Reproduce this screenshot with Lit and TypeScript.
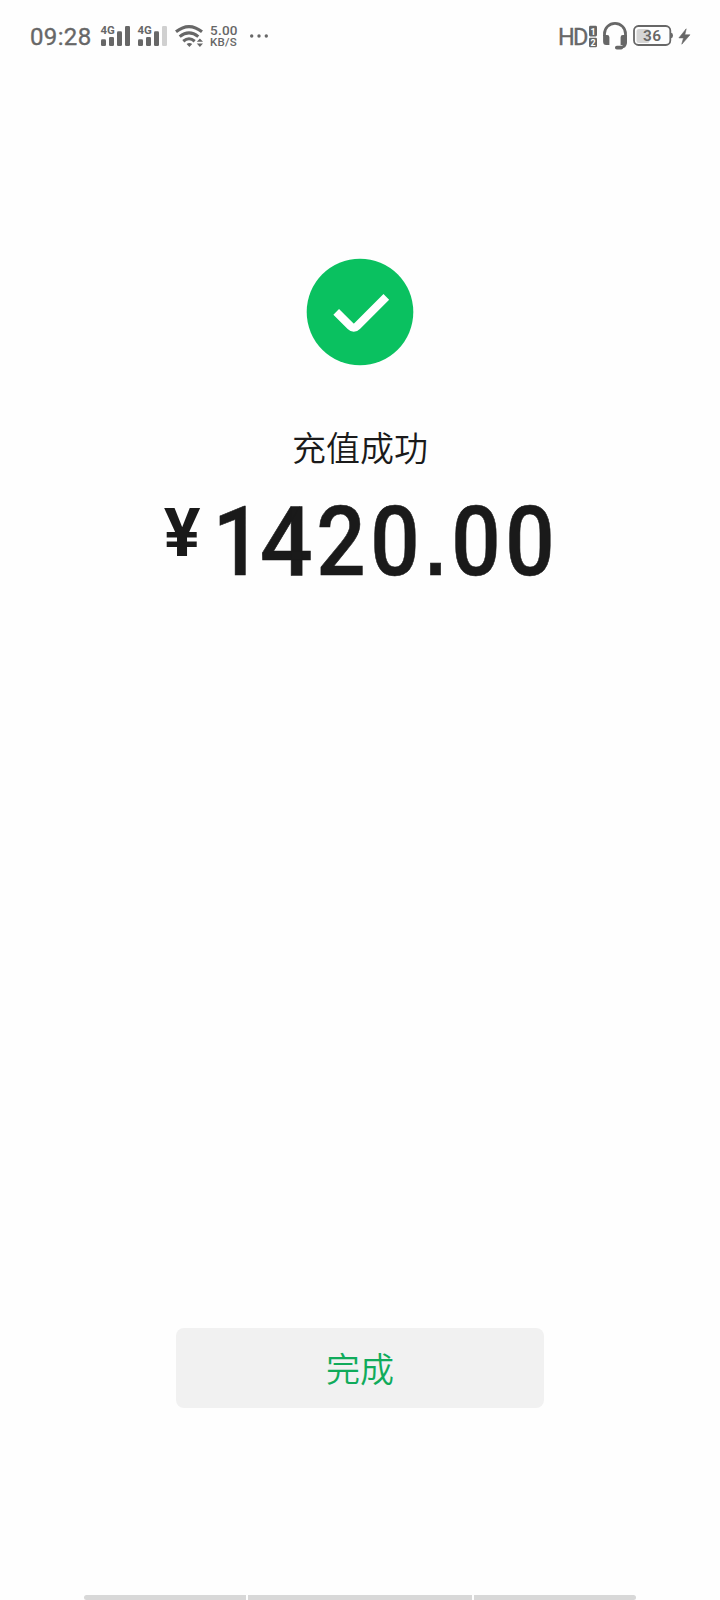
import { LitElement, html, css, svg } from "lit";
import { customElement, property } from "lit/decorators.js";

@customElement("signal-icon")
class SignalIcon extends LitElement {
  @property({ type: Number }) level = 4;
  static styles = css`
    :host { display: block; width: 30px; height: 72px; }
    svg { display: block; fill: #676767; overflow: visible; }
    .off { fill: #d0d0d0; }
    text { font: 700 11px Roboto, sans-serif; }
  `;
  render() {
    const tops = [39.3, 37, 31.3, 26];
    return html`<svg width="30" height="72" viewBox="0 0 30 72">
      <text x="-0.5" y="34" textLength="14.3" lengthAdjust="spacingAndGlyphs">4G</text>
      ${tops.map((y, i) => svg`<rect class=${i < this.level ? "on" : "off"} x=${i * 8} y=${y} width="5" height=${46 - y} rx="1.3"/>`)}
    </svg>`;
  }
}

@customElement("status-bar")
class StatusBar extends LitElement {
  static styles = css`
    :host { display: flex; justify-content: space-between; height: 72px; padding: 0 29px 0 30px; box-sizing: border-box; color: #676767; font-family: Roboto, sans-serif; }
    .group { display: flex; }
    svg { display: block; fill: #676767; }
    .time { width: 71px; font-size: 24px; line-height: 74px; letter-spacing: 0.35px; -webkit-text-stroke: 0.35px #676767; }
    .first { margin-right: 7px; }
    .wifi { margin-left: 7px; }
    .speed { width: 38px; margin-left: 6px; padding-top: 24px; box-sizing: border-box; font-size: 13.5px; line-height: 12px; font-weight: 500; letter-spacing: 0.25px; white-space: nowrap; }
    .unit { font-size: 11.5px; line-height: 12px; }
    .line { fill: none; stroke: #676767; }
    .charge { fill: #d5d5d5; }
    .hd { font-size: 23.5px; stroke: #676767; stroke-width: 0.35px; }
    .sim { font-size: 9px; font-weight: 700; fill: #fff; }
    .percent { font-size: 15.5px; font-weight: 600; }
  `;
  render() {
    return html`
      <div class="group">
        <div class="time">09:28</div>
        <signal-icon class="first" .level=${4}></signal-icon>
        <signal-icon .level=${3}></signal-icon>
        <svg class="wifi" width="29" height="72" viewBox="175 0 29 72">
          <g class="line" stroke-width="3.1">
            <path d="M176 31.8Q189 21.4 202 31.8"/>
            <path d="M179.7 36.6Q189 29 198.3 36.6"/>
            <path d="M183.3 41.2Q189 36.3 194.7 41.2"/>
          </g>
          <path d="M186.6 43.9Q189.4 42.3 192.2 43.9L189.4 47ZM196.8 41.8L199.9 38.4 203 41.8ZM196.8 43.5H203L199.9 46.9Z"/>
        </svg>
        <div class="speed"><div>5.00</div><div class="unit">KB/S</div></div>
        <svg width="22" height="72" viewBox="248 0 22 72">
          <circle cx="251.7" cy="36" r="1.7"/><circle cx="259" cy="36" r="1.7"/><circle cx="266.3" cy="36" r="1.7"/>
        </svg>
      </div>
      <svg width="134" height="72" viewBox="557 0 134 72">
        <text class="hd" x="558" y="45" textLength="30.5">HD</text>
        <rect x="589" y="25.8" width="8" height="10.7" rx="1.4"/>
        <rect x="589" y="37.8" width="8" height="9.5" rx="1.4"/>
        <text class="sim" x="590.4" y="34.6">1</text><text class="sim" x="590.4" y="45.8">2</text>
        <path class="line" stroke-width="2.8" d="M604.5 36V33.8A10.5 10.5 0 0 1 625.5 33.8V42.5Q625.5 47.3 620 47.3"/>
        <path d="M603.1 35H607.2Q609.4 35 609.4 37.2V45H606.2Q603.1 45 603.1 41.5ZM626.9 35H622.8Q620.6 35 620.6 37.2V45H624.2Q626.9 45 626.9 41.5Z"/>
        <rect x="615" y="45.7" width="8" height="3.8" rx="1.8"/>
        <rect class="charge" x="636.5" y="29" width="13" height="14" rx="2.5"/>
        <rect class="line" stroke-width="1.8" x="634" y="26" width="36.3" height="19" rx="4.5"/>
        <path d="M671 32.8Q673 33 673 35.5T671 38.2Z"/>
        <text class="percent" x="643" y="41" textLength="18.2">36</text>
        <path stroke="#676767" stroke-width="0.6" d="M686.2 28.8L678.9 37.9H683.5L681.8 44.2L690 34.8H684.8Z"/>
      </svg>`;
  }
}

@customElement("app-root")
class AppRoot extends LitElement {
  static styles = css`
    :host { display: flex; flex-direction: column; align-items: center; width: 720px; height: 1600px; overflow: hidden; background: #fefefe; color: #1a1a1a; font-family: Roboto, "Noto Sans CJK SC", sans-serif; }
    status-bar { width: 720px; }
    .success { display: block; margin-top: 186px; }
    .title { margin-top: 56px; font: 350 34px/50px "Noto Sans CJK SC", sans-serif; }
    .amount { display: block; margin-top: 13px; fill: #1a1a1a; }
    .currency { font-size: 67.5px; font-weight: 700; }
    .value { font-size: 96px; font-weight: 500; text-anchor: middle; stroke: #1a1a1a; stroke-width: 0.6px; }
    .point { font: 700 80px "Liberation Sans", sans-serif; }
    .done { margin-top: 731px; width: 368px; height: 80px; padding: 0; border: 0; border-radius: 8px; background: #f1f1f1; color: #10ab5b; font: 350 34px/78px "Noto Sans CJK SC", sans-serif; }
    .handle { display: grid; grid-template-columns: 162px 224px 162px; gap: 2px; width: 552px; margin-top: auto; height: 5px; }
    .handle i { background: #d8d8d8; }
    .handle i:first-child { border-radius: 3px 0 0 3px; }
    .handle i:last-child { border-radius: 0 3px 3px 0; }
  `;
  render() {
    return html`
      <status-bar></status-bar>
      <svg class="success" width="108" height="108" viewBox="0 0 108 108">
        <circle cx="54" cy="54" r="53.3" fill="#0ac160"/>
        <path d="M30.2 53.8L44.5 68.1Q47.8 71.4 51.1 68.1L80.3 38.9" fill="none" stroke="#fff" stroke-width="8"/>
      </svg>
      <div class="title">充值成功</div>
      <svg class="amount" width="400" height="112" viewBox="160 485 400 112">
        <text class="currency" textLength="36.8" lengthAdjust="spacingAndGlyphs" x="163.8" y="556">¥</text>
        <text class="value" y="575" transform="scale(0.905 1)"><tspan x="262.5">1</tspan><tspan x="316.2" textLength="58.5" lengthAdjust="spacingAndGlyphs">4</tspan><tspan x="376.8">2</tspan><tspan x="436.5">0</tspan><tspan class="point" x="481.2">.</tspan><tspan x="526">0</tspan><tspan x="585.6">0</tspan></text>
      </svg>
      <button class="done">完成</button>
      <div class="handle"><i></i><i></i><i></i></div>`;
  }
}
